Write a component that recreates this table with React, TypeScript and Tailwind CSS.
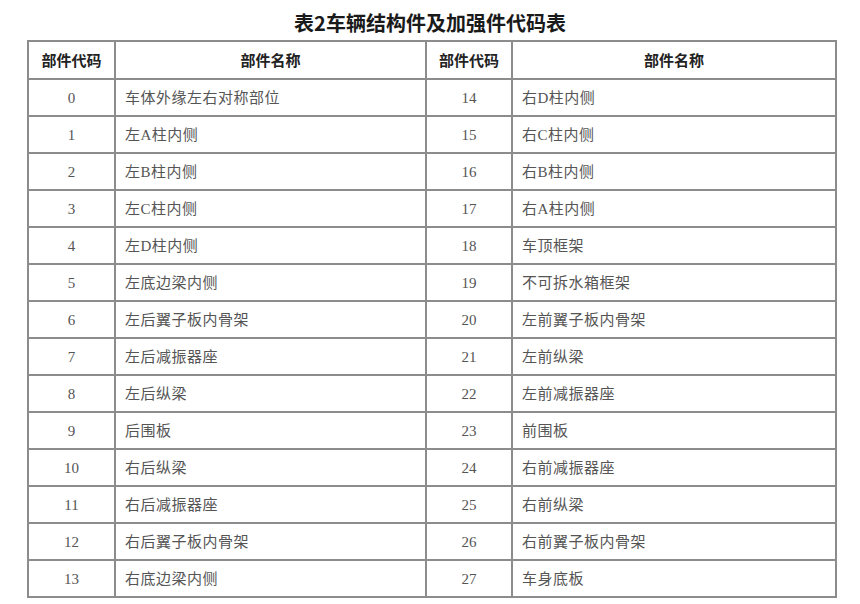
const left: [string, string][] = [
  ["0", "车体外缘左右对称部位"],
  ["1", "左A柱内侧"],
  ["2", "左B柱内侧"],
  ["3", "左C柱内侧"],
  ["4", "左D柱内侧"],
  ["5", "左底边梁内侧"],
  ["6", "左后翼子板内骨架"],
  ["7", "左后减振器座"],
  ["8", "左后纵梁"],
  ["9", "后围板"],
  ["10", "右后纵梁"],
  ["11", "右后减振器座"],
  ["12", "右后翼子板内骨架"],
  ["13", "右底边梁内侧"],
];

const right: [string, string][] = [
  ["14", "右D柱内侧"],
  ["15", "右C柱内侧"],
  ["16", "右B柱内侧"],
  ["17", "右A柱内侧"],
  ["18", "车顶框架"],
  ["19", "不可拆水箱框架"],
  ["20", "左前翼子板内骨架"],
  ["21", "左前纵梁"],
  ["22", "左前减振器座"],
  ["23", "前围板"],
  ["24", "右前减振器座"],
  ["25", "右前纵梁"],
  ["26", "右前翼子板内骨架"],
  ["27", "车身底板"],
];

const sans = "font-['Noto_Sans_CJK_SC',sans-serif]";
const serif = "font-['Liberation_Serif','Noto_Sans_CJK_SC',serif]";

export default function App() {
  return (
    <div className="w-[860px] h-[604px] bg-white overflow-hidden">
      {/* title */}
      <div
        className={`${sans} pt-[10px] pb-[4px] text-center text-[20px] leading-[26px] font-bold text-[#1a1a1a]`}
      >
        表2车辆结构件及加强件代码表
      </div>

      <table className="ml-[27px] w-[808px] border-collapse table-fixed">
        <colgroup>
          <col className="w-[87px]" />
          <col className="w-[311px]" />
          <col className="w-[86px]" />
          <col className="w-[324px]" />
        </colgroup>
        <thead>
          <tr className="h-[38px]">
            {["部件代码", "部件名称", "部件代码", "部件名称"].map((h, i) => (
              <th
                key={i}
                className={`${sans} border-2 border-[#8c8c8c] text-center text-[15px] font-bold text-[#222] p-0`}
              >
                {h}
              </th>
            ))}
          </tr>
        </thead>
        <tbody>
          {left.map((row, i) => (
            <tr key={row[0]} className="h-[37px]">
              <td className={`${serif} border-2 border-[#8c8c8c] text-center text-[15px] text-[#555] pt-[2px]`}>
                {row[0]}
              </td>
              <td className={`${serif} border-2 border-[#8c8c8c] pl-[9px] pt-[2px] text-[15px] text-[#555] tracking-[0.5px]`}>
                {row[1]}
              </td>
              <td className={`${serif} border-2 border-[#8c8c8c] text-center text-[15px] text-[#555] pt-[2px]`}>
                {right[i][0]}
              </td>
              <td className={`${serif} border-2 border-[#8c8c8c] pl-[9px] pt-[2px] text-[15px] text-[#555] tracking-[0.5px]`}>
                {right[i][1]}
              </td>
            </tr>
          ))}
        </tbody>
      </table>
    </div>
  );
}
